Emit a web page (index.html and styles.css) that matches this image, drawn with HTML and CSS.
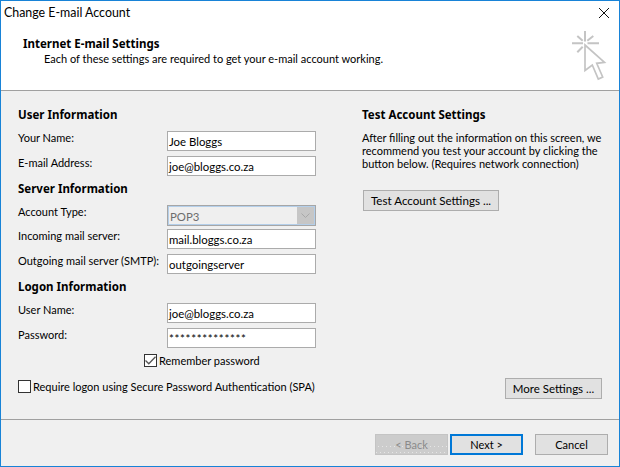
FILE: index.html
```html
<!DOCTYPE html>
<html lang="en">
<head>
<meta charset="utf-8">
<title>Change E-mail Account</title>
<link rel="stylesheet" href="styles.css">
</head>
<body>
<div class="window">
  <div class="titlebar">
    <span class="title">Change E-mail Account</span>
    <svg class="close" width="10" height="10" viewBox="0 0 10 10"><path d="M0 0L10 10M10 0L0 10" stroke="#111" stroke-width="1" fill="none"/></svg>
  </div>
  <header class="header">
    <div class="header-text">
      <h1 class="header-title">Internet E-mail Settings</h1>
      <p class="header-sub">Each of these settings are required to get your e-mail account working.</p>
    </div>
    <svg class="wizard-icon" width="34" height="50" viewBox="0 0 34 50">
      <g stroke="#c4c4c4" fill="none">
        <path stroke-width="2" d="M13 0V10.500M0 12.300H11M15.500 12.300H27M5.300 5L10.700 9.700M21.300 5L15.300 9.700M5.300 21.300L10.700 15.700"/>
        <path stroke-width="1.700" d="M13 14V39.500L20.300 34L26.300 48L30.700 46L24.700 32.300L32.500 31.300Z" fill="#fff"/>
      </g>
    </svg>
  </header>
  <main class="body">
    <section class="left">
      <h2 class="section-title first">User Information</h2>
      <div class="row"><label class="label">Your Name:</label><div class="field">Joe Bloggs</div></div>
      <div class="row"><label class="label">E-mail Address:</label><div class="field">joe@bloggs.co.za</div></div>
      <h2 class="section-title">Server Information</h2>
      <div class="row combo-row"><label class="label">Account Type:</label>
        <div class="combo"><span class="combo-text">POP3</span>
          <span class="combo-btn"><svg width="9" height="5" viewBox="0 0 9 5"><path d="M0.500 0.500L4.500 4.500L8.500 0.500" stroke="#a8a8a8" fill="none"/></svg></span>
        </div>
      </div>
      <div class="row"><label class="label">Incoming mail server:</label><div class="field">mail.bloggs.co.za</div></div>
      <div class="row"><label class="label">Outgoing mail server (SMTP):</label><div class="field">outgoingserver</div></div>
      <h2 class="section-title">Logon Information</h2>
      <div class="row"><label class="label">User Name:</label><div class="field">joe@bloggs.co.za</div></div>
      <div class="row"><label class="label">Password:</label><div class="field password">**************</div></div>
      <div class="check-line remember">
        <span class="checkbox"><svg width="11" height="9" viewBox="0 0 11 9"><path d="M0.500 4.500L3.800 7.800L10.500 0.800" stroke="#555" stroke-width="1.300" fill="none"/></svg></span>
        <span>Remember password</span>
      </div>
      <div class="check-line spa">
        <span class="checkbox"></span>
        <span>Require logon using Secure Password Authentication (SPA)</span>
      </div>
    </section>
    <section class="right">
      <h2 class="section-title first">Test Account Settings</h2>
      <p class="desc">After filling out the information on this screen, we recommend you test your account by clicking the button below. (Requires network connection)</p>
      <button class="btn test-btn" type="button">Test Account Settings ...</button>
      <div class="spacer"></div>
      <button class="btn more-btn" type="button">More Settings ...</button>
    </section>
  </main>
  <footer class="footer">
    <button class="btn nav back" type="button" disabled>&lt; Back</button>
    <button class="btn nav next" type="button">Next &gt;</button>
    <button class="btn nav cancel" type="button">Cancel</button>
  </footer>
</div>
</body>
</html>
```

FILE: styles.css
```css
* { box-sizing: border-box; }
html, body { margin: 0; padding: 0; }
body {
  width: 620px;
  height: 467px;
  overflow: hidden;
  font-family: Lato, "Noto Sans", sans-serif;
  font-size: 11px;
  line-height: 15px;
  color: #000;
}
.window {
  width: 620px;
  height: 467px;
  display: flex;
  flex-direction: column;
  border: 1px solid #1883d7;
  background: #f0f0f0;
}
.titlebar {
  height: 29px;
  flex: none;
  background: #fff;
  display: flex;
  align-items: flex-start;
  justify-content: space-between;
  padding: 4px 10px 0 3px;
}
.title { font-size: 12.400px; }
.close { margin-top: 3px; }
.header {
  height: 61px;
  flex: none;
  background: #fff;
  border-bottom: 1px solid #a0a0a0;
  display: flex;
  justify-content: space-between;
  padding: 0 13px 0 22px;
}
.header-title {
  margin: 6px 0 0;
  font-family: "Noto Sans", sans-serif;
  font-size: 11.500px;
  line-height: 15px;
  font-weight: 700;
}
.header-sub { margin: 0 0 0 21px; }
.wizard-icon { margin-top: 1px; overflow: visible; }
.body {
  flex: 1;
  display: flex;
  padding: 17px 17px 0 17px;
  min-height: 0;
}
.left { width: 298px; flex: none; }
.right {
  flex: 1;
  min-width: 0;
  margin-left: 46px;
  display: flex;
  flex-direction: column;
  padding-bottom: 20px;
}
.section-title {
  margin: 1px 0 9px;
  font-family: "Noto Sans", sans-serif;
  font-size: 11.500px;
  line-height: 14px;
  font-weight: 700;
}
.section-title.first { margin-top: 0; }
.row {
  display: flex;
  justify-content: space-between;
  height: 25px;
}
.label { display: block; white-space: nowrap; line-height: 13px; }
.field {
  width: 149px;
  height: 20px;
  background: #fff;
  border: 1px solid #ababab;
  padding: 2px 1px;
  font-size: 11.400px;
  white-space: nowrap;
  line-height: 15px;
}
.field.password { letter-spacing: 0.700px; }
.combo-row { height: 24px; }
.combo {
  width: 149px;
  height: 21px;
  background: #efefef;
  border: 1px solid #a6a6a6;
  box-shadow: inset 0 0 0 1px #b4cfea;
  display: flex;
  justify-content: space-between;
  padding: 1px 1px 1px 2px;
  color: #6d6d6d;
  font-size: 11.400px;
}
.combo-text { padding: 2px 0 0; }
.combo-btn {
  width: 17px;
  background: #c6c6c6;
  display: flex;
  align-items: center;
  justify-content: center;
}
.check-line { display: flex; align-items: center; white-space: nowrap; }
.remember { margin: -1px 0 0 126px; height: 17px; }
.spa { margin-top: 9px; height: 17px; }
.checkbox {
  width: 13px;
  height: 13px;
  flex: none;
  margin-right: 2px;
  background: #fff;
  border: 1px solid #333;
  display: flex;
  align-items: center;
  justify-content: center;
}
.desc { margin: 0; line-height: 13px; }
.btn {
  font: inherit;
  font-size: 11.300px;
  color: #000;
  height: 21px;
  padding: 0;
  background: #e1e1e1;
  border: 1px solid #adadad;
  border-radius: 0;
  white-space: nowrap;
}
.test-btn { width: 136px; margin: 20px 0 0 1px; flex: none; font-size: 11.600px; }
.spacer { flex: 1; }
.more-btn { width: 97px; align-self: flex-end; flex: none; font-size: 11.500px; }
.footer {
  height: 47px;
  flex: none;
  border-top: 1px solid #a0a0a0;
  display: flex;
  justify-content: flex-end;
  align-items: flex-start;
  padding: 14px 11px 0 0;
}
.nav { width: 73px; font-size: 11px; }
.back {
  background-color: #cccccc;
  background-image:
    linear-gradient(90deg, #e6e6e6 1px, transparent 1px),
    linear-gradient(90deg, #e6e6e6 1px, transparent 1px);
  background-size: 4px 1px, 4px 1px;
  background-position: 2px 11px, 0 17px;
  background-repeat: repeat-x;
  border-color: #c4c4c4;
  color: #8a8a8a;
  margin-right: 2px;
}
.next { border: 2px solid #0078d7; margin-right: 12px; }
```
